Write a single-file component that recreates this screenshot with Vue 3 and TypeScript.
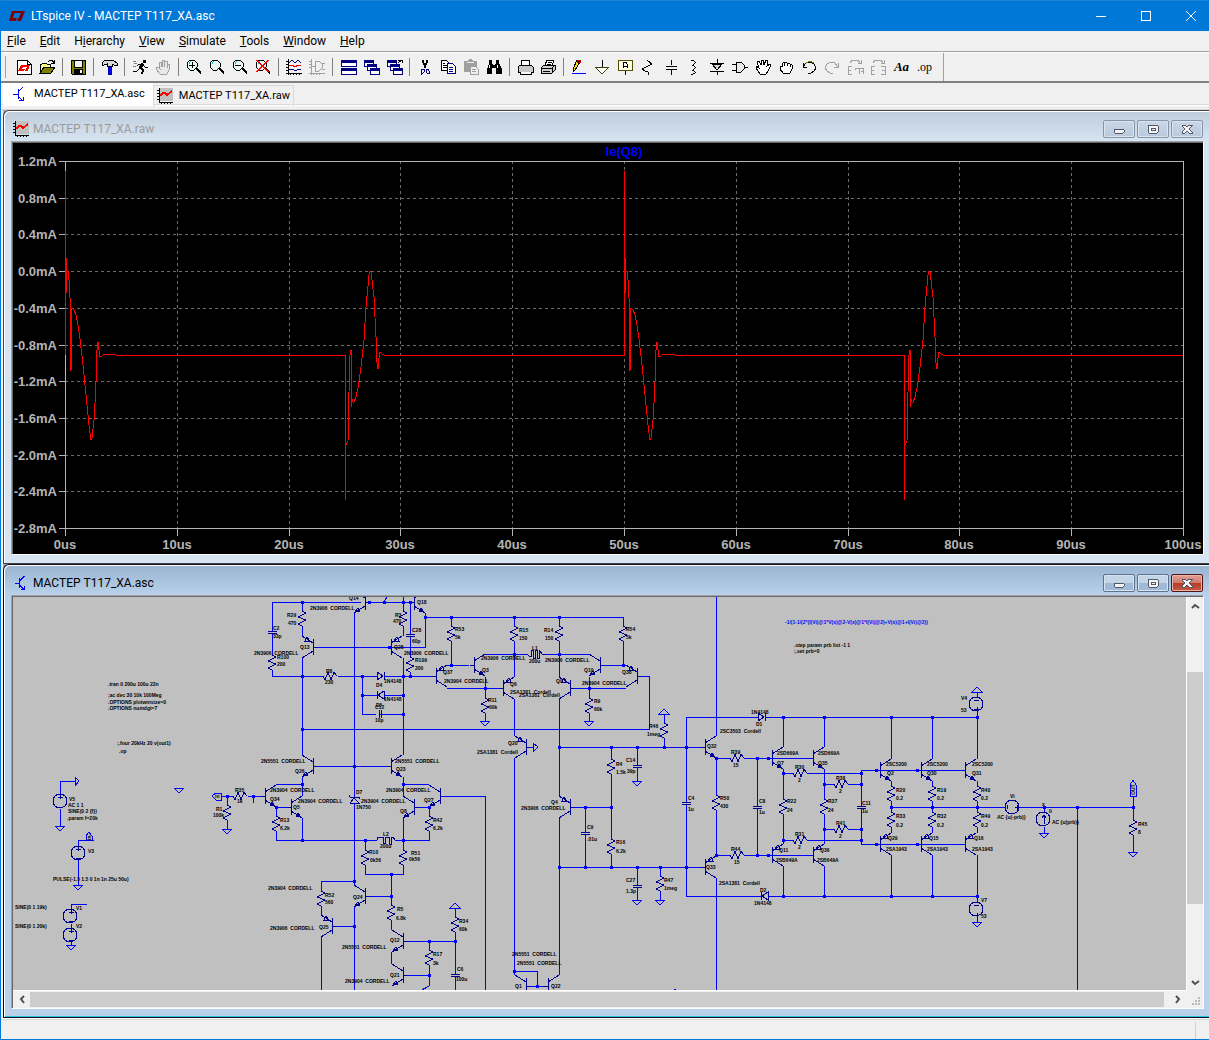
<script setup lang="ts">
type Label = [number, number, string]

const menus: [string, string, string][] = [
  ['', 'F', 'ile'], ['', 'E', 'dit'], ['H', 'i', 'erarchy'], ['', 'V', 'iew'],
  ['', 'S', 'imulate'], ['', 'T', 'ools'], ['', 'W', 'indow'], ['', 'H', 'elp'],
]

interface Shape { d: string; s?: string; f?: string }
interface Tool { name: string; shapes?: Shape[]; text?: string }
const K = '#000'
const N = '#000080'
const G = '#a0a0a0'
const hand = 'M5 15L1 10L1 8L3 8L5 10L4 4L6 3L7 8L7 1L9 1L9 8L10 2L12 2L12 9L13 5L15 5L14 11L12 15Z'
const lens: Shape[] = [
  { d: 'M4 1H8L11 4V8L8 11H4L1 8V4Z', s: K, f: '#e8f6f6' },
  { d: 'M3 5V4L5 2', s: '#00c8c8' },
  { d: 'M10 9L15 14M10 10L15 15M11 9L15 13', s: K },
]
const cascade = 'M1 1H10V7H1ZM1 3H10M4 5H13V11H4ZM4 7H13M7 9H16V15H7ZM7 11H16'

const tools: (Tool | null)[] = [
  { name: 'New schematic', shapes: [{ d: 'M1 1H11L15 5V15H1Z', s: K, f: '#fff' }, { d: 'M11 1V5H15', s: K }, { d: 'M2 12L5 6H8L6 10H9L8 12ZM8 6H14L12 12H9L11 8H7Z', f: '#f00' }] },
  { name: 'Open', shapes: [{ d: 'M1 14V5H3L4 4H7L8 5H11V8', s: K, f: '#ffff80' }, { d: 'M1 14L5 8H16L12 14Z', s: K, f: '#808000' }, { d: 'M9 3L11 1H13L15 4M15 1V4H12', s: K }] },
  null,
  { name: 'Save', shapes: [{ d: 'M1 1H15V15H2L1 14Z', s: K, f: '#808000' }, { d: 'M4 1H12V8H4Z', s: K, f: '#f0f0f0' }, { d: 'M4 10H13V15H4Z', f: K }, { d: 'M10 11H12V14H10Z', f: '#fff' }] },
  null,
  { name: 'Control panel', shapes: [{ d: 'M7 7H10V15H7Z', s: '#0000c0', f: '#0000ff' }, { d: 'M1 4L4 1H12L16 4V6H13L11 5V7H6V5L3 6H1Z', s: K, f: '#d8d8d8' }] },
  null,
  { name: 'Run', shapes: [{ d: 'M11 1H14V4H11Z', f: K }, { d: 'M11 4L8 9M10 4L7 9M12 5L9 9M11 5H7L5 7M11 6L13 8H16M8 9L5 12L1 13M8 9L11 11L9 15M9 9L12 11L10 15', s: K }, { d: 'M1 2L4 2M2 5L5 4M1 8L4 7', s: '#808080' }] },
  { name: 'Halt', shapes: [{ d: hand, s: G, f: '#e8e8e8' }] },
  null,
  { name: 'Zoom in', shapes: [...lens, { d: 'M3 6H9M6 3V9', s: K }] },
  { name: 'Zoom area', shapes: lens },
  { name: 'Zoom out', shapes: [...lens, { d: 'M3 6H9', s: K }] },
  { name: 'Zoom to fit', shapes: [...lens, { d: 'M1 1L13 13M2 1L14 13M13 1L1 13M14 1L2 13', s: '#f00' }] },
  null,
  { name: 'Autorange', shapes: [{ d: 'M2 0V16M0 14H16M0 2H2M0 5H2M0 8H2M0 11H2M4 14V16M7 14V16M10 14V16M13 14V16', s: K }, { d: 'M3 4L6 1L9 4L12 1L15 4M3 10L6 10L8 11L11 11L15 10', s: N }, { d: 'M3 7L6 6L9 8L12 6L15 7', s: '#f00' }] },
  { name: 'Pick traces', shapes: [{ d: 'M2 0V16M0 14H16M0 2H2M0 5H2M0 8H2M4 14V16M7 14V16M10 14V16M3 7H6M6 2V12H10L13 9V5L10 2ZM13 4H16M13 10H16', s: G }] },
  null,
  { name: 'Tile windows', shapes: [{ d: 'M1 1H16V7H1ZM1 9H16V15H1Z', s: N, f: '#fff' }, { d: 'M1 1H16V3H1ZM1 9H16V11H1Z', s: N, f: N }] },
  { name: 'Cascade windows', shapes: [{ d: cascade, s: N, f: '#fff' }, { d: 'M1 2H10M4 6H13M7 10H16', s: N }] },
  { name: 'Close all windows', shapes: [{ d: cascade, s: N, f: '#fff' }, { d: 'M1 2H10M4 6H13M7 10H16', s: N }, { d: 'M12 1H16V4M12 4L16 1', s: K }] },
  null,
  { name: 'Cut', shapes: [{ d: 'M5 1L8 9M6 1L9 9M11 1L8 9M10 1L7 9', s: K }, { d: 'M5 10H7V13L5 15H4V11ZM9 10H11L12 12V14H10L9 13Z', s: N }] },
  { name: 'Copy', shapes: [{ d: 'M1 1H6L8 3V11H1Z', s: K, f: '#fff' }, { d: 'M3 4H5M3 6H7M3 8H7', s: K }, { d: 'M7 4H12L15 7V14H7Z', s: N, f: '#fff' }, { d: 'M9 8H13M9 10H13M9 12H13', s: N }] },
  { name: 'Paste', shapes: [{ d: 'M1 2H5L6 0H9L10 2H14V13H1Z', f: G }, { d: 'M7 7H12L15 10V15H7Z', s: G, f: '#f0f0f0' }, { d: 'M4 3H11', s: '#f0f0f0' }, { d: 'M9 10H13M9 12H13', s: G }] },
  { name: 'Find', shapes: [{ d: 'M3 1H6V4L7 6H9L10 4V1H13V4L16 10V15H10V9H6V15H1V10L3 5Z', f: K }, { d: 'M4 6L3 9M11 6L11 9', s: '#fff' }] },
  null,
  { name: 'Print setup', shapes: [{ d: 'M4 6L5 1H12L13 6', s: K, f: '#fff' }, { d: 'M1 8L3 6H14L16 8V13H1Z', s: K, f: '#c8c8c8' }, { d: 'M3 13V15H14V13', s: K, f: '#fff' }] },
  { name: 'Print', shapes: [{ d: 'M5 6L7 1H14L12 7', s: K, f: '#fff' }, { d: 'M8 3H12M7 5H11', s: K }, { d: 'M1 9L4 6H15V11L12 14H1Z', s: K, f: '#d0d0d0' }, { d: 'M1 9H12L15 6M12 9V14M3 12H10', s: K }] },
  null,
  { name: 'Wire', shapes: [{ d: 'M2 10L6 1H9V3L4 11L2 13Z', s: K, f: '#ffe000' }, { d: 'M6 1H9V3H6Z', s: '#c00000', f: K }, { d: 'M1 14H15', s: '#00f' }] },
  { name: 'Ground', shapes: [{ d: 'M8 1V8', s: K }, { d: 'M1 8H15L8 15Z', s: '#404000', f: '#fff' }] },
  { name: 'Label net', shapes: [{ d: 'M8 11V16', s: K }, { d: 'M1 1H15V11H1Z', s: '#505000', f: '#ffffe8' }, { d: 'M6 9V5L7 3H9L10 5V9M6 7H10', s: K }] },
  { name: 'Resistor', shapes: [{ d: 'M7 1L8 2L12 5L8 7L2 10L5 12L8 13V16', s: K }] },
  { name: 'Capacitor', shapes: [{ d: 'M8 1V6M3 7H14M3 10H14M8 10V16', s: K }] },
  { name: 'Inductor', shapes: [{ d: 'M5 1H7L9 3V4L7 6H6M7 6L9 8V9L7 11H6M7 11L9 13V14L7 15H5', s: K }] },
  { name: 'Diode', shapes: [{ d: 'M8 0V4M1 4H15M8 12V16M1 12H15', s: K }, { d: 'M3 5H13L8 11Z', s: K, f: '#d8d8d0' }] },
  { name: 'Component', shapes: [{ d: 'M0 5H4M0 11H4M12 8H16', s: K }, { d: 'M4 3H9L12 6V10L9 13H4Z', s: K, f: '#e8e8e8' }] },
  { name: 'Move', shapes: [{ d: 'M5 15L1 9L1 7L4 9L2 3L4 2L6 6V1H8L9 6L11 1L13 2L12 7L15 5L16 6L13 12L11 15Z', s: K, f: '#fff' }] },
  { name: 'Drag', shapes: [{ d: 'M5 14L2 10V7H4V5L6 3H8L9 4H11L12 5L14 6V10L12 14Z', s: K, f: '#fff' }, { d: 'M6 4V7M9 4V7M12 5V8', s: K }] },
  { name: 'Undo', shapes: [{ d: 'M2 4V8H6M2 8L5 4L9 3L13 5L15 9L13 12L10 14H7', s: K }, { d: 'M5 4L9 2L13 4', s: '#808000' }] },
  { name: 'Redo', shapes: [{ d: 'M14 4V8H10M14 8L11 4L7 3L3 5L1 9L3 12L6 14H9', s: G }] },
  { name: 'Mirror', shapes: [{ d: 'M5 7H1V15H5M1 11H4M8 9H16V15M12 9V15M8 9V11M16 12H14M3 4L5 1H11L13 4M14 1V4H11', s: G }] },
  { name: 'Rotate', shapes: [{ d: 'M5 7H1V15H5M1 11H4M11 7H15V15H11M12 11H15M3 4L5 1H11L13 4M14 1V4H11', s: G }] },
  { name: 'Text', text: 'Aa' },
  { name: 'SPICE directive', text: '.op' },
]

/* ---- waveform pane ---- */
const yTicks: [number, string][] = [
  [161, '1.2mA'], [198, '0.8mA'], [234, '0.4mA'], [271, '0.0mA'], [308, '-0.4mA'], [345, '-0.8mA'],
  [381, '-1.2mA'], [418, '-1.6mA'], [455, '-2.0mA'], [491, '-2.4mA'], [528, '-2.8mA'],
]
const xTicks: [number, string][] = [65, 177, 289, 400, 512, 624, 736, 848, 959, 1071, 1183].map((x, i) => [x, `${i * 10}us`])

const rise = [
  [0, 355], [0, 171], [0, 293], [1, 258], [1, 293], [1, 271], [3, 271], [4, 280], [5, 298], [5, 345], [6, 371], [7, 308], [9, 310],
  [11, 315], [13, 325], [15, 339], [18, 365], [21, 395], [24, 425], [26, 440], [27, 438], [29, 420], [30, 403], [31, 382],
  [32, 350], [33, 342], [34, 350], [35, 357], [37, 356], [39, 354], [50, 354], [51, 355],
]
const fall = [
  [0, 355], [0, 500], [0, 445], [1, 445], [3, 441], [4, 392], [5, 355], [6, 350], [6, 407], [7, 399], [8, 402], [9, 402], [11, 397], [13, 388],
  [16, 367], [19, 340], [21, 307], [24, 275], [25, 271], [26, 272], [29, 297], [31, 337], [32, 363], [33, 369], [34, 358],
  [35, 352], [37, 354], [39, 355],
]
const shift = (pts: number[][], dx: number) => pts.map(([x, y]) => `${x + dx},${y}`).join(' ')
const trace = [shift(rise, 65), shift(fall, 345), shift(rise, 624), shift(fall, 904), '1183,355'].join(' ')

/* ---- schematic pane ---- */
const wires = [
  'M272 602H361M369 602H410M302 602V610M272 602V631M272 634V654M272 670V676H323M338 676H377M384 676H432',
  'M302 627V636M302 658V755M317 647H425V617M403 597V610M403 627V636M403 658V755M384 602L387 597',
  'M410 602V634M410 637V656M410 672V676M425 613V617H623M354 613V797M354 803V885',
  'M362 676V714H376M362 695H377M384 695H403M380 714H403M302 729H649V676H641',
  'M317 766H387M302 777V796M403 777V796M276 784H302M403 784H429M302 818V840M403 818V850',
  'M451 617V626M451 642V665M447 665H469M447 688H499M514 617V626M514 642V677M559 617V626M559 642V677',
  'M623 617V626M623 642V665M604 665H626M485 654H527M545 654H589M485 677V698M485 713V721M589 677V698M589 713V721',
  'M574 688H626M514 699V736M514 758V975M559 699V796M530 747H533M559 747H701M664 714V723M664 739V747',
  'M611 747V759M611 775V839M637 747V765M637 768V781M574 807H611M585 807V832M585 835V867M611 854V867M559 818V975',
  'M559 867H701M637 867V885M637 888V900M660 867V876M660 892V900M686 717V802M686 805V896H761M686 717H758',
  'M514 971H537V986M530 986H544M485 991V796H444M276 807V816M276 832V840H377M395 840H429V832M276 807H287M418 807H429V816',
  'M365 840V850M365 866V874H403V866M391 874V905M391 921V930M391 952V964M369 896H391M321 891V881H354M321 907V915',
  'M321 937V991M354 907V991M336 926H354M407 941H455M407 975H429M429 941V950M429 966V986L420 991M455 908V917M455 932V974M455 977V991',
  'M716 597V736M716 758V795M716 810V855M716 758H730M744 758H813M716 855H730M744 855H813M716 878V991',
  'M757 758V806M757 809V855M765 717H977M768 896H977M783 717V747M824 717V747M783 769V799M783 814V844M824 769V799M824 814V844',
  'M783 773H793M807 773H861M824 784H834M848 784H861M783 840H793M807 840H861M824 829H834M848 829H861M783 866V896M824 866V896',
  'M861 806V770H965M861 809V844H965M891 717V759M932 717V759M977 712V759M891 781V786M932 781V786M977 781V786',
  'M891 801V812M932 801V812M977 801V812M891 827V833M932 827V833M977 827V833M891 855V896M932 855V896M977 855V902',
  'M891 807H1005M1019 807H1133V796M1044 807V812M1044 827V833M1077 807V991M1133 807V820M1133 836V852M977 692V697M977 916V922',
  'M75 781H60V794M60 809V826M94 840H78V846M78 860V885M87 904H71V909M71 924V928M71 942V945',
  'M221 796H233M248 796H261M253 796V803M227 796V805M227 820V829',
].join('')

const nodes = [
  [302, 602], [369, 602], [384, 602], [403, 602], [410, 602], [425, 617], [389, 647], [302, 676], [362, 676], [403, 676], [410, 676],
  [362, 695], [403, 695], [403, 714], [302, 729], [354, 766], [302, 784], [403, 784], [451, 617], [514, 617], [559, 617], [451, 665],
  [623, 665], [514, 654], [559, 654], [485, 688], [589, 688], [559, 747], [611, 747], [637, 747], [664, 747], [686, 747], [585, 807],
  [611, 807], [559, 867], [585, 867], [611, 867], [637, 867], [660, 867], [686, 867], [514, 971], [537, 986], [276, 807], [429, 807],
  [302, 840], [365, 840], [403, 840], [391, 874], [391, 896], [354, 881], [354, 926], [429, 941], [455, 941], [429, 975], [716, 758],
  [757, 758], [768, 758], [716, 855], [757, 855], [768, 855], [783, 717], [824, 717], [891, 717], [932, 717], [977, 717], [783, 773],
  [861, 773], [824, 784], [861, 784], [783, 840], [861, 840], [824, 829], [861, 829], [876, 770], [917, 770], [876, 844], [917, 844],
  [891, 807], [932, 807], [977, 807], [783, 896], [824, 896], [891, 896], [932, 896], [977, 896], [1044, 807], [1077, 807],
  [1133, 807], [227, 796], [253, 796],
]

const vres = (x: number, y: number) => `M${x} ${y - 1}V${y}L${x + 4} ${y + 2}L${x - 4} ${y + 6}L${x + 4} ${y + 9}L${x - 4} ${y + 13}L${x} ${y + 15}V${y + 16}`
const hres = (x: number, y: number) => `M${x} ${y}L${x + 2} ${y + 4}L${x + 5} ${y - 4}L${x + 8} ${y + 4}L${x + 11} ${y - 4}L${x + 14} ${y}`
const cap = (x: number, y: number) => `M${x - 4} ${y}h9m0 2h-9M${x} ${y - 4}v4m0 2v5`
/* x, y of the base bar; side = where collector and emitter lie; up = emitter above; p = PNP */
const bjt = (x: number, y: number, side: number, up: boolean, p: boolean) => {
  const e = up ? -1 : 1
  const head = p
    ? `M${x + 8 * side} ${y + 6 * e}L${x + 3 * side} ${y + 6 * e}L${x + 6 * side} ${y + 10 * e}Z`
    : `M${x + 5 * side} ${y + 9 * e}L${x + 10 * side} ${y + 10 * e}L${x + 7 * side} ${y + 6 * e}Z`
  return `M${x} ${y - 8}V${y + 8}M${x} ${y}H${x - 4 * side}M${x} ${y + 4}L${x + 11 * side} ${y + 11}M${x} ${y - 4}L${x + 11 * side} ${y - 11}${head}`
}
const source = (x: number, y: number) => `M${x - 7} ${y}a7 7 0 1 0 14 0a7 7 0 1 0 -14 0`

const resistorsV = [
  [302, 611], [272, 655], [403, 611], [410, 657], [451, 626], [514, 626], [559, 626], [623, 626], [485, 698], [589, 698], [664, 723],
  [611, 759], [611, 839], [660, 876], [276, 816], [429, 816], [365, 850], [403, 850], [391, 905], [321, 891], [429, 950], [455, 917],
  [716, 795], [783, 799], [824, 799], [891, 786], [932, 786], [977, 786], [891, 812], [932, 812], [977, 812], [1133, 820], [227, 805],
]
const resistorsH = [[323, 676], [730, 758], [730, 855], [793, 773], [834, 784], [793, 840], [834, 829], [233, 796]]
const caps = [[272, 631], [410, 634], [637, 765], [585, 832], [637, 885], [686, 802], [757, 806], [861, 806], [455, 974]]
const transistors: [number, number, number, boolean, boolean][] = [
  [365, 602, -1, false, false], [414, 602, 1, false, false], [313, 647, -1, true, true], [391, 647, 1, true, true],
  [436, 676, 1, true, true], [313, 766, -1, false, false], [391, 766, 1, false, false], [474, 665, 1, false, false],
  [600, 665, -1, false, false], [503, 688, 1, true, true], [570, 688, -1, true, true], [637, 676, -1, true, true],
  [526, 747, -1, true, true], [570, 807, -1, true, true], [526, 986, -1, false, false], [548, 986, 1, false, false],
  [265, 796, 1, false, false], [291, 807, 1, false, false], [414, 807, -1, false, false], [440, 796, -1, false, false],
  [365, 896, -1, false, false], [332, 926, -1, true, true], [403, 941, -1, false, false], [403, 975, -1, false, false],
  [705, 747, 1, false, false], [705, 867, 1, true, true], [772, 758, 1, false, false], [813, 758, 1, false, false],
  [772, 855, 1, true, true], [813, 855, 1, true, true], [880, 770, 1, false, false], [921, 770, 1, false, false],
  [965, 770, 1, false, false], [880, 844, 1, true, true], [921, 844, 1, true, true], [965, 844, 1, true, true],
]
const symbols = [
  ...resistorsV.map(([x, y]) => vres(x, y)),
  ...resistorsH.map(([x, y]) => hres(x, y)),
  ...caps.map(([x, y]) => cap(x, y)),
  ...transistors.map((t) => bjt(...t)),
  ...[[60, 801], [78, 853], [70, 916], [70, 935], [976, 704], [976, 909], [1012, 807], [1043, 819]].map(([x, y]) => source(x, y)),
  'M60 794V799M58 797H63M58 807H63M78 846V851M76 849H81M76 858H81M71 909V914M69 912H74M69 921H74M71 928V933M69 931H74M69 940H74',
  'M974 700H979M977 707V712M974 709H979M974 905H979M977 913V918M974 915H979M1007 805V809M1015 807H1020M1017 805V810M1044 815V824M1042 818L1044 815L1046 818',
  'M371 676H377V672V680V672L383 676L377 680M384 672V680M384 676H390M371 695H377M377 691V699M384 691V699L378 695L384 691M384 695H390',
  'M376 714H372M379 710V718M381 710V718M381 714H387M754 717H758V713V721L764 717L758 713M765 713V721M765 717H769',
  'M757 896H761M761 892V900M768 892V900L762 896L768 892V900M768 896H772M350 797H359L360 799M350 797L349 795M350 803H359L354 798L350 803',
  'M527 654L529 656H531V650H533V658H535V650H537V658H539V650L543 655L545 654M377 840V837H383V843H385V837H389V844H391V837H393L395 840',
].join('')

const down = (x: number, y: number) => `M${x - 5} ${y}H${x + 5}L${x} ${y + 5}Z`
const up = (x: number, y: number) => `M${x - 5} ${y + 5}H${x + 5}L${x} ${y}Z`
const grounds = [
  ...[[485, 721], [589, 721], [637, 781], [637, 900], [660, 900], [60, 826], [78, 885], [71, 945], [179, 788], [227, 829], [977, 922],
    [1044, 833], [1133, 852]].map(([x, y]) => down(x, y)),
  ...[[664, 709], [455, 903], [977, 687], [675, 989]].map(([x, y]) => up(x, y)),
  'M533 743V752L538 747ZM75 777V786L79 781ZM212 796L216 793H221V800H216ZM86 840V836L89 832L92 836V840ZM1130 796V785L1133 780L1136 785V796Z',
].join('')

const row = (ys: [number, string][], x: number): Label[] => ys.map(([y, t]) => [x, y, t])
const labels: Label[] = [
  [349, 600, 'Q14'], [287, 617, 'R29'], [288, 625, '470'], [310, 610, '2N3906 CORDELL'], [417, 604, 'Q18'], [395, 617, 'R3'],
  [393, 623, '470'], [273, 630, 'C2'], [273, 638, '33p'], [254, 655, '2N3906 CORDELL'], [277, 659, 'R100'], [277, 666, '200'],
  [300, 649, 'Q13'], [394, 649, 'Q28'], [412, 632, 'C28'], [412, 643, '60p'], [404, 655, '2N3906 CORDELL'], [415, 662, 'R109'],
  [415, 670, '200'], [326, 673, 'R8'], [325, 684, '230'], [376, 687, 'D4'], [384, 683, '1N4148'], [384, 701, '1N4148'],
  [376, 707, 'D5'], [375, 709, 'C12'], [375, 722, '10p'], [443, 674, 'Q37'], [444, 683, '2N3904 CORDELL'], [261, 763, '2N5551 CORDELL'],
  [295, 773, 'Q26'], [395, 763, '2N5551 CORDELL'], [396, 771, 'Q23'], [270, 792, '2N3904 CORDELL'], [386, 792, '2N3904 CORDELL'],
  [356, 794, 'D7'], [270, 801, 'Q34'], [298, 803, '2N3904 CORDELL'], [293, 809, 'Q5'], [356, 809, '1N750'], [361, 803, '2N3904 CORDELL'],
  [400, 813, 'Q8'], [424, 802, 'Q27'], [280, 822, 'R13'], [280, 830, '6.2k'], [433, 822, 'R42'], [433, 830, '6.2k'], [383, 836, 'L2'],
  [380, 848, '200u'], [369, 854, 'R10'], [370, 862, '0k56'], [411, 855, 'R51'], [409, 861, '0k56'], [268, 890, '2N3904 CORDELL'],
  [325, 897, 'R52'], [325, 904, '560'], [353, 899, 'Q24'], [319, 929, 'Q25'], [270, 930, '2N3906 CORDELL'], [397, 911, 'R5'],
  [396, 920, '6.8k'], [459, 923, 'R34'], [459, 931, '60k'], [390, 942, 'Q12'], [342, 949, '2N5551 CORDELL'], [433, 956, 'R17'],
  [433, 965, '3k'], [390, 977, 'Q21'], [345, 983, '2N3904 CORDELL'], [457, 971, 'C6'], [456, 981, '100u'],
  [455, 631, 'R53'], [455, 639, '5k'], [519, 632, 'R15'], [519, 640, '150'], [544, 632, 'R14'], [545, 640, '150'], [626, 631, 'R54'],
  [626, 639, '5k'], [532, 650, 'L1'], [529, 663, '200u'], [481, 660, '2N3906 CORDELL'], [545, 662, '2N3906 CORDELL'], [482, 672, 'Q3'],
  [584, 672, 'Q19'], [622, 674, 'Q38'], [510, 686, 'Q6'], [556, 683, 'Q9'], [510, 694, '2SA1381 Cordell'], [519, 697, '2SA1381 Cordell'],
  [582, 685, '2N3904 CORDELL'], [488, 702, 'R11'], [489, 709, '60k'], [594, 703, 'R9'], [594, 711, '60k'], [649, 728, 'R46'],
  [647, 736, '1meg'], [508, 745, 'Q20'], [477, 754, '2SA1381 Cordell'], [616, 766, 'R4'], [616, 774, '1.5k'], [626, 762, 'C14'],
  [627, 773, '39p'], [551, 804, 'Q4'], [521, 810, '2N3906 CORDELL'], [587, 829, 'C9'], [587, 841, '.01u'], [616, 844, 'R16'],
  [616, 853, '6.2k'], [626, 882, 'C27'], [626, 893, '1.3p'], [664, 882, 'R47'], [664, 890, '1meg'], [512, 956, '2N5551 CORDELL'],
  [517, 965, '2N5551 CORDELL'], [515, 988, 'Q1'], [551, 988, 'Q22'], [688, 800, 'C4'], [688, 811, '1u'],
  [751, 714, '1N4148'], [756, 726, 'D1'], [720, 733, '2SC3503 Cordell'], [707, 748, 'Q32'], [731, 754, 'R39'], [733, 767, '15'],
  [777, 755, '2SD669A'], [777, 765, 'Q7'], [818, 755, '2SD669A'], [818, 765, 'Q35'], [795, 769, 'R30'], [798, 782, '2'],
  [836, 780, 'R38'], [839, 793, '2'], [836, 825, 'R41'], [839, 838, '2'], [795, 836, 'R31'], [798, 849, '2'],
  ...row([[766, '2SC5200'], [851, '2SA1943']], 886), ...row([[766, '2SC5200'], [851, '2SA1943']], 927),
  ...row([[766, '2SC5200'], [851, '2SA1943']], 972),
  [887, 775, 'Q2'], [927, 775, 'Q30'], [972, 775, 'Q31'], [888, 840, 'Q29'], [929, 840, 'Q15'], [974, 840, 'Q16'],
  ...row([[792, 'R20'], [800, '0.2'], [818, 'R33'], [827, '0.2']], 896),
  ...row([[792, 'R19'], [800, '0.2'], [818, 'R32'], [827, '0.2']], 937),
  ...row([[792, 'R40'], [800, '0.2'], [818, 'R49'], [827, '0.2']], 981),
  [862, 805, 'C11'], [862, 813, '1u'], [787, 803, 'R22'], [787, 812, '24'], [828, 803, 'R37'], [828, 812, '24'],
  [759, 803, 'C8'], [759, 814, '1u'], [720, 800, 'R50'], [720, 808, '430'], [731, 851, 'R44'], [734, 864, '15'],
  [779, 852, 'Q11'], [776, 862, '2SB649A'], [820, 852, 'Q36'], [817, 862, '2SB649A'], [706, 869, 'Q33'], [719, 885, '2SA1381 Cordell'],
  [760, 892, 'D2'], [754, 905, '1N4148'], [961, 700, 'V4'], [961, 712, '53'], [981, 902, 'V7'], [981, 918, '53'],
  [1010, 798, 'Vi'], [997, 819, 'AC {u(-prb)}'], [1042, 806, 'x'], [1049, 813, 'Ii'], [1052, 824, 'AC {u(prb)}'],
  [1138, 826, 'R45'], [1138, 834, '8'], [69, 801, 'V5'], [88, 853, 'V3'], [76, 910, 'V1'], [76, 928, 'V2'],
  [235, 792, 'R35'], [237, 803, '1k'], [216, 811, 'R1'], [213, 817, '100k'], [215, 798, 'in'],
  [108, 686, '.tran 0 200u 100u 22n'], [108, 697, ';ac dec 30 10k 100Meg'], [108, 704, '.OPTIONS plotwinsize=0'],
  [108, 710, '.OPTIONS numdgt=7'], [117, 745, ';.four 20kHz 20 v(out1)'], [119, 753, '.op'], [68, 807, 'AC 1 1'],
  [68, 813, 'SINE(0 2 {f})'], [67, 820, '.param f=20k'], [53, 881, 'PULSE(-1.5 1.5 0 1n 1n 25u 50u)'],
  [15, 909, 'SINE(0 1 19k)'], [15, 928, 'SINE(0 1 20k)'], [794, 647, '.step param prb list -1 1'], [794, 653, ';.set prb=0'],
]
/* model names keep a two-space gap before their suffix */
const wide = (t: string) => t.replace(/ (?=c)/i, '\u00a0\u00a0')
</script>

<template>
  <div class="app">
    <header class="titlebar">
      <svg class="logo" width="16" height="12" viewBox="0 0 16 12"><path d="M0 11L3 1H6L4 8H8L7 11ZM6 1H16L12 11H8L12 3H5Z" fill="#800000" /></svg>
      <h1>LTspice IV - МАСТЕР T117_XA.asc</h1>
      <div class="sys">
        <button aria-label="Minimize"><svg width="10" height="10"><path d="M0 5H10" /></svg></button>
        <button aria-label="Maximize"><svg width="12" height="12"><path d="M1 1H10V10H1Z" /></svg></button>
        <button aria-label="Close"><svg class="smooth" width="10" height="10"><path d="M0 0L10 10M10 0L0 10" /></svg></button>
      </div>
    </header>

    <nav class="menu">
      <button v-for="m in menus" :key="m.join('')">{{ m[0] }}<u>{{ m[1] }}</u>{{ m[2] }}</button>
    </nav>

    <div class="toolbar">
      <div class="tools">
        <template v-for="(t, i) in tools" :key="i">
          <span v-if="!t" class="sep"></span>
          <button v-else :aria-label="t.name">
            <span v-if="t.text" :class="t.text === 'Aa' ? 'glyph-text' : 'glyph-op'">{{ t.text }}</span>
            <svg v-else width="17" height="17" viewBox="0 0 17 17" shape-rendering="crispEdges">
              <path v-for="(s, j) in t.shapes" :key="j" :d="s.d" :stroke="s.s || 'none'" :fill="s.f || 'none'" />
            </svg>
          </button>
        </template>
      </div>
    </div>

    <div class="tabs">
      <button class="tab on">
        <svg width="16" height="16" viewBox="0 0 16 16"><path class="q" d="M5 3V13M0 8H5M5 6L10 1M5 10L10 15M6 14H10V11" /></svg>
        <span>МАСТЕР T117_XA.asc</span>
      </button>
      <button class="tab">
        <svg width="17" height="16" viewBox="0 0 17 16" shape-rendering="crispEdges"><path d="M2 0H16V13H2Z" fill="#c0c0c0" /><path d="M2 0V14H16M0 2H2M0 5H2M0 8H2M0 11H2M4 14V16M7 14V16M10 14V16M13 14V16" stroke="#000" fill="none" /><path d="M3 8L6 5H8L10 7L15 3" stroke="#f00" stroke-width="2" fill="none" /></svg>
        <span>МАСТЕР T117_XA.raw</span>
      </button>
    </div>

    <main class="mdi">
      <section class="child">
        <div class="caption">
          <svg width="17" height="16" viewBox="0 0 17 16" shape-rendering="crispEdges"><path d="M2 0H16V13H2Z" fill="#c0c0c0" /><path d="M2 0V14H16M0 2H2M0 5H2M0 8H2M0 11H2M4 14V16M7 14V16M10 14V16M13 14V16" stroke="#000" fill="none" /><path d="M3 8L6 5H8L10 7L15 3" stroke="#f00" stroke-width="2" fill="none" /></svg>
          <h2>МАСТЕР T117_XA.raw</h2>
          <div class="winbtns">
            <button aria-label="Minimize"><svg width="13" height="11"><rect x="1" y="5" width="10" height="4" rx="1" /></svg></button>
            <button aria-label="Restore"><svg width="13" height="11"><rect x="1" y="1" width="10" height="8" rx="1" /><rect x="4" y="4" width="4" height="2" /></svg></button>
            <button aria-label="Close"><svg width="13" height="11"><path d="M1 1H4L6 3L8 1H11V2L8 5L11 8V9H8L6 7L4 9H1V8L4 5L1 2Z" /></svg></button>
          </div>
        </div>
        <div class="client plot">
          <svg width="1190" height="410" viewBox="13 143 1190 410">
            <g shape-rendering="crispEdges" fill="none">
              <path class="grid" v-for="y in yTicks.slice(1, 10)" :key="'h' + y[0]" :d="`M65 ${y[0]}H1183`" />
              <path class="grid" v-for="x in xTicks.slice(1, 10)" :key="'v' + x[0]" :d="`M${x[0]} 161V528`" />
              <path class="axis" d="M65 161H1183V528H65Z" />
              <path class="axis" v-for="y in yTicks" :key="'a' + y[0]" :d="`M59 ${y[0]}H65`" />
              <path class="axis" v-for="x in xTicks" :key="'b' + x[0]" :d="`M${x[0]} 528V536`" />
              <polyline class="trace" :points="trace" />
            </g>
            <text class="tick end" v-for="y in yTicks" :key="y[1]" x="57" :y="y[0] + 5">{{ y[1] }}</text>
            <text class="tick mid" v-for="x in xTicks" :key="x[1]" :x="x[0]" y="549">{{ x[1] }}</text>
            <text class="tick mid name" x="624" y="156">Ie(Q8)</text>
          </svg>
        </div>
      </section>

      <section class="child active">
        <div class="caption">
          <svg width="17" height="16" viewBox="0 0 16 16"><path class="q" d="M6 3V13M1 8H6M6 6L11 1M6 10L11 15M7 14H11V11" /></svg>
          <h2>МАСТЕР T117_XA.asc</h2>
          <div class="winbtns">
            <button aria-label="Minimize"><svg width="13" height="11"><rect x="1" y="5" width="10" height="4" rx="1" /></svg></button>
            <button aria-label="Restore"><svg width="13" height="11"><rect x="1" y="1" width="10" height="8" rx="1" /><rect x="4" y="4" width="4" height="2" /></svg></button>
            <button class="close" aria-label="Close"><svg width="13" height="11"><path d="M1 1H4L6 3L8 1H11V2L8 5L11 8V9H8L6 7L4 9H1V8L4 5L1 2Z" /></svg></button>
          </div>
        </div>
        <div class="client sheet">
          <div class="canvas">
            <svg width="1173" height="394" viewBox="13 597 1173 394">
              <g shape-rendering="crispEdges" fill="none">
                <path class="sym" :d="symbols" />
                <path class="wire" :d="wires" />
                <path class="wire" :d="grounds" />
                <rect class="node" v-for="(n, i) in nodes" :key="i" :x="n[0] - 1" :y="n[1] - 1" width="3" height="3" />
              </g>
              <text class="part" v-for="(l, i) in labels" :key="i" :x="l[0]" :y="l[1]">{{ wide(l[2]) }}</text>
              <text class="part expr" x="785" y="624">-1/(1-1/(2*(I(Vi)@1*V(x)@2-V(x)@1*I(Vi)@2)+V(x)@1+I(Vi)@2))</text>
              <text class="part" transform="translate(1135 795) rotate(-90)">OUT</text>
              <text class="part" transform="translate(91 840) rotate(-90)">in</text>
            </svg>
          </div>
          <div class="vbar">
            <button aria-label="Scroll up"><svg width="9" height="6"><path d="M1 5L4 2L8 5" /></svg></button>
            <div class="track"><div class="thumb"></div></div>
            <button aria-label="Scroll down"><svg width="9" height="6"><path d="M1 1L4 4L8 1" /></svg></button>
          </div>
          <div class="hbar">
            <button aria-label="Scroll left"><svg width="6" height="9"><path d="M5 1L2 4L5 8" /></svg></button>
            <div class="thumb"></div>
            <button aria-label="Scroll right"><svg width="6" height="9"><path d="M1 1L4 4L1 8" /></svg></button>
          </div>
          <svg class="grip" width="17" height="17"><path d="M12 6h2v2h-2zM9 9h2v2h-2zM12 9h2v2h-2zM6 12h2v2h-2zM9 12h2v2h-2zM12 12h2v2h-2z" /></svg>
        </div>
      </section>
    </main>

    <footer class="status"><span></span></footer>
  </div>
</template>

<style>
body { margin: 0; }
</style>

<style scoped>
* { box-sizing: border-box; }
.app {
  display: flex; flex-direction: column; height: 100vh; min-height: 640px; overflow: hidden;
  background: #f0f0f0; border-left: 1px solid #0078d7; border-bottom: 1px solid #0078d7;
  font: 12px/16px Roboto, "Open Sans", sans-serif; color: #000;
}
button { font: inherit; color: inherit; background: none; border: 0; padding: 0; margin: 0; }
h1, h2 { margin: 0; font-size: 12px; font-weight: 400; }
svg { display: block; flex: none; }

.titlebar { flex: none; display: flex; align-items: center; height: 31px; background: #0078d7; border-top: 1px solid #1883d7; color: #fff; padding-left: 8px; }
.titlebar h1 { flex: 1; margin-left: 6px; }
.sys { display: flex; height: 100%; }
.sys button { width: 45px; display: flex; align-items: center; justify-content: center; }
.sys button:last-child { width: 46px; margin-right: -5px; }
.sys path { stroke: #fff; fill: none; shape-rendering: crispEdges; }
.sys .smooth path { shape-rendering: auto; }

.menu { flex: none; display: flex; height: 21px; border-bottom: 1px solid #a0a0a0; }
.menu button { padding: 0 8px 0 6px; }

.toolbar { flex: none; display: flex; height: 31px; border-top: 1px solid #fff; border-bottom: 2px solid #808080; }
.tools { display: flex; align-items: center; padding-right: 7px; border-right: 1px solid #a0a0a0; margin-left: 4px; }
.tools::before { content: ""; width: 1px; height: 22px; background: #a0a0a0; margin-right: 7px; }
.tools button { width: 23px; height: 22px; display: flex; align-items: center; justify-content: center; }
.sep { width: 8px; height: 18px; background: linear-gradient(90deg, transparent 3px, #808080 3px, #808080 4px, transparent 4px); }
.glyph-text { font: italic bold 13px/16px "Liberation Serif", serif; }
.glyph-op { font: 12px/16px "Liberation Serif", serif; }

.tabs { flex: none; display: flex; align-items: flex-start; height: 27px; padding-left: 2px; border-bottom: 1px solid #d9d9d9; background: linear-gradient(#f0f0f0 21px, #d9d9d9 21px, #d9d9d9 22px, #fff 22px, #fff 23px, #f0f0f0 23px); font-size: 11px; }
.tab { display: flex; align-items: center; gap: 5px; height: 21px; margin-top: 2px; padding: 0 3px; border: 1px solid #d9d9d9; border-bottom: 0; }
.tab.on { height: 23px; margin-top: 0; padding: 0 8px 2px 10px; background: #fff; border: 0; }
.q { stroke: #00f; fill: none; shape-rendering: crispEdges; }

.mdi { flex: 1; min-height: 0; display: flex; flex-direction: column; margin-left: 2px; background: #ababab; }
.child { flex: 1 1 0; min-height: 0; display: flex; flex-direction: column; border: 1px solid #45454f; border-right: 0; border-radius: 6px 0 0 0; box-shadow: inset 1px 1px #fff; background: linear-gradient(#bfcddb, #d7e4f2 30px); padding: 1px 5px 8px 7px; }
.child.active { background: linear-gradient(#99b4d1, #b9d1ea 30px); border-color: #101018; box-shadow: inset 1px 1px #fff, inset 0 -1px #29c5e0; }
.caption { flex: none; display: flex; align-items: center; height: 29px; padding: 5px 1px 0 2px; gap: 2px; }
.caption h2 { flex: 1; color: #9a9a9a; margin-left: 1px; }
.active .caption h2 { color: #000; }
.winbtns { display: flex; gap: 2px; }
.winbtns button { width: 32px; height: 18px; display: flex; align-items: center; justify-content: center; border: 1px solid #8795a8; border-radius: 2px; background: linear-gradient(#c9d7e6, #b9c9dc); box-shadow: inset 0 0 0 1px #d8e3ee; }
.winbtns svg rect, .winbtns svg path { fill: #f4f4f4; stroke: #50586a; shape-rendering: crispEdges; }
.active .winbtns button { border-color: #5c7390; background: linear-gradient(#c4d5e8 50%, #9fb9d6 50%); }
.active .winbtns .close { border-color: #521414; background: linear-gradient(#e3a298, #cf7a6c 48%, #b33c28 50%, #c75a44); box-shadow: inset 0 0 0 1px #e8b4ac; }

.client { flex: 1; min-height: 0; overflow: hidden; border: 1px solid; border-color: #a0a0a0 #fff #fff #a0a0a0; box-shadow: inset 1px 1px #696969; }
.plot { background: #000; padding: 1px 0 0 1px; }
.grid { stroke: #6c6c6c; stroke-dasharray: 3 3; }
.axis { stroke: #b4b4b4; }
.trace { stroke: #f00; }
.tick { font: bold 13px "Liberation Sans", Arial, sans-serif; fill: #b4b4b4; }
.end { text-anchor: end; }
.mid { text-anchor: middle; }
.name { fill: #00f; }

.sheet { display: grid; grid-template: minmax(0, 1fr) 17px / minmax(0, 1fr) 17px; background: #f0f0f0; padding: 1px 0 0 1px; }
.canvas { background: #c0c0c0; overflow: hidden; border-bottom: 1px solid #fff; }
.wire { stroke: #00f; }
.sym { stroke: #000090; }
.node { fill: #00f; }
.part { font: bold 5px "Liberation Sans", Arial, sans-serif; fill: #000; }
.expr { fill: #00f; }
.vbar { display: flex; flex-direction: column; border-left: 1px solid #fff; }
.vbar button, .hbar button { width: 17px; height: 17px; flex: none; display: flex; align-items: center; justify-content: center; }
.vbar path, .hbar path { stroke: #505050; stroke-width: 2; fill: none; }
.track { flex: 1; display: flex; flex-direction: column; }
.track .thumb { margin-top: 58px; height: 232px; background: #cdcdcd; }
.hbar { display: flex; }
.hbar .thumb { flex: 1; background: #cdcdcd; margin: 1px 5px 1px 0; }
.grip path { fill: #b8b8b8; }

.status { flex: none; display: flex; justify-content: flex-end; height: 21px; border-top: 1px solid #fff; box-shadow: inset 0 1px #d9d9d9; }
.status span { width: 14px; margin-top: 3px; border-left: 1px solid #d0d0d0; }
</style>
